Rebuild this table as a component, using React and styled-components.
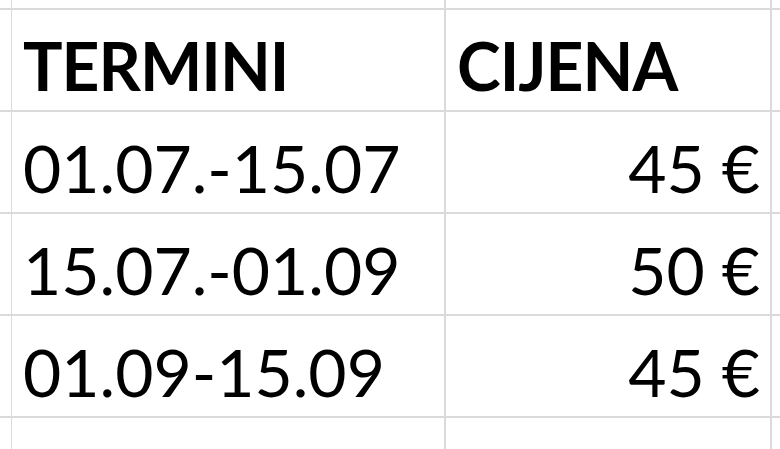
import React from "react";
import styled, { createGlobalStyle } from "styled-components";

const Global = createGlobalStyle`
  html, body { margin: 0; padding: 0; background: #fff; }
  body { width: 780px; height: 449px; overflow: hidden; }
`;

const Sheet = styled.div`
  display: grid;
  grid-template-columns: 10px 432px 324px 8px;
  grid-template-rows: 8px repeat(4, 100px) 31px;
  gap: 2px;
  background: #dadada;
  width: 780px;
  height: 449px;
  overflow: hidden;
`;

const Cell = styled.div`
  background: #fff;
  display: flex;
  align-items: flex-end;
  justify-content: ${(p) => (p.$right ? "flex-end" : "flex-start")};
  padding: 0 ${(p) => (p.$right ? "10px" : "0")} 0 ${(p) => (p.$right ? "0" : "11px")};
  font-family: Lato, "Open Sans", sans-serif;
  font-size: 66px;
  font-weight: ${(p) => (p.$bold ? 700 : 400)};
  letter-spacing: ${(p) => (p.$bold ? "-1px" : "0")};
  color: #000;
  line-height: 1;
  overflow: hidden;
  white-space: nowrap;
`;

const Text = styled.span`
  display: block;
  margin-bottom: 11px;
`;

const rows = [
  ["TERMINI", "CIJENA", true],
  ["01.07.-15.07", "45 €", false],
  ["15.07.-01.09", "50 €", false],
  ["01.09-15.09", "45 €", false],
];

export default function App() {
  const cells = [];
  for (let i = 0; i < 4; i++) cells.push(<Cell key={`t${i}`} />);
  rows.forEach(([a, b, head], r) => {
    cells.push(<Cell key={`l${r}`} />);
    cells.push(
      <Cell key={`a${r}`} $bold={head}>
        <Text>{a}</Text>
      </Cell>
    );
    cells.push(
      head ? (
        <Cell key={`b${r}`} $bold>
          <Text>{b}</Text>
        </Cell>
      ) : (
        <Cell key={`b${r}`} $right>
          <Text>{b}</Text>
        </Cell>
      )
    );
    cells.push(<Cell key={`r${r}`} />);
  });
  for (let i = 0; i < 4; i++) cells.push(<Cell key={`e${i}`} />);
  return (
    <>
      <Global />
      <Sheet>{cells}</Sheet>
    </>
  );
}
